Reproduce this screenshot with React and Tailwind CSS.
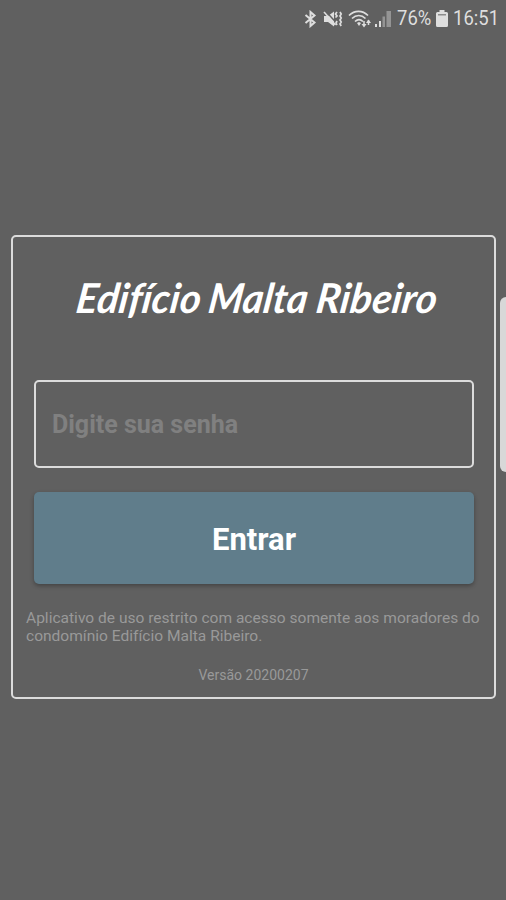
function BluetoothIcon() {
  return (
    <svg className="shrink-0" width="13" height="18" viewBox="0 0 13 18" fill="none" stroke="currentColor" strokeWidth="2">
      <path d="M1.500 5 10.500 12.500 6.500 16V2L10.500 5.500 1.500 13" />
    </svg>
  );
}

function MutedIcon() {
  return (
    <svg className="shrink-0" width="20" height="18" viewBox="0 0 20 18" fill="currentColor">
      <path d="M1 6h4l6-4.500v15L5 12H1z" />
      <path d="M3 1.500 13.500 13" stroke="#606060" strokeWidth="1.500" />
      <path d="M1 2 12.500 15" stroke="currentColor" strokeWidth="1.600" />
      <path
        d="M14 2l-1.500 2 1.500 2-1.500 1.500M14 11l-1 2 1 2M17 2l1.200 2-1.200 2 1.200 2-1.200 2 1.200 2-1.200 2 1.200 2"
        fill="none"
        stroke="currentColor"
        strokeWidth="1.700"
      />
    </svg>
  );
}

function WifiIcon() {
  return (
    <svg className="shrink-0" width="24" height="20" viewBox="0 0 24 20" fill="none" stroke="currentColor" strokeWidth="1.700">
      <path d="M1 6.500C6.500 1 14.500 1 20 6.500M4 9.500c4-4 9.500-4 13.500 0M7 12.500c2.500-2.400 5.500-2.400 8 0" />
      <path d="m9 14 2-1 2 1-2 3z" fill="currentColor" stroke="none" />
      <path d="M16 12v5M20.500 16v-5" strokeWidth="1.500" />
      <path d="m13.500 15 2.500 3.500 2.500-3.500zM18 14l2.500-3.500 2.500 3.500z" fill="currentColor" stroke="none" />
    </svg>
  );
}

function SignalIcon() {
  return (
    <svg className="shrink-0" width="17" height="18" viewBox="0 0 17 18" fill="currentColor">
      <path d="M0 14h2v3H0zM4 11h2v6H4z" />
      <path d="M7.500 6.500H10V17H7.500zM11.500 1H16v16h-4.500z" opacity=".42" />
    </svg>
  );
}

function BatteryIcon() {
  return (
    <svg className="shrink-0" width="12" height="18" viewBox="0 0 12 18" fill="currentColor">
      <path d="M3.500 0h5v2h2q1.500 0 1.500 1.500v12q0 1.500-1.500 1.500h-9Q0 17 0 15.500v-12Q0 2 1.500 2h2z" />
      <path d="M2 4h8v1.500H2z" fill="#606060" opacity=".65" />
    </svg>
  );
}

function StatusBar() {
  return (
    <header className="flex h-[37px] items-center pl-[304px] text-[#dedede]">
      <BluetoothIcon />
      <span className="ml-[6px] shrink-0">
        <MutedIcon />
      </span>
      <span className="ml-[5px] shrink-0">
        <WifiIcon />
      </span>
      <span className="ml-[3px] shrink-0">
        <SignalIcon />
      </span>
      <span className="ml-[5px] w-[38px] shrink-0 origin-left scale-x-[0.88] text-[21px] leading-none">76%</span>
      <span className="ml-[1px] shrink-0">
        <BatteryIcon />
      </span>
      <span className="ml-[5px] w-[46px] shrink-0 origin-left scale-x-[0.88] text-[21px] leading-none">16:51</span>
    </header>
  );
}

function Title() {
  return (
    <h1 className="flex h-[60px] items-center pl-[64px] font-['Lato',sans-serif] text-[41px] leading-none font-bold whitespace-nowrap text-white italic [font-variant-ligatures:none]">
      <span className="w-[132px] shrink-0">
        <span className="inline-block origin-left scale-x-[0.98] -skew-x-[8deg]">Edifício</span>
      </span>
      <span className="w-[108px] shrink-0">
        <span className="inline-block origin-left scale-x-[0.97] -skew-x-[8deg]">Malta</span>
      </span>
      <span className="shrink-0">
        <span className="inline-block origin-left scale-x-[0.99] -skew-x-[8deg]">Ribeiro</span>
      </span>
    </h1>
  );
}

export default function App() {
  return (
    <div className="relative h-[900px] w-[506px] overflow-hidden bg-[#606060] font-['Roboto',sans-serif]">
      <StatusBar />

      <main className="mt-[198px] ml-[11px] h-[464px] w-[485px] rounded-[5px] border-2 border-[#dcdcdc] pt-[30px]">
        <Title />

        <form className="mt-[53px] ml-[21px] w-[440px]" onSubmit={(e) => e.preventDefault()}>
          <input
            type="password"
            placeholder="Digite sua senha"
            className="block h-[88px] w-full rounded-[5px] border-2 border-[#dcdcdc] bg-transparent px-[16px] text-[25px] font-bold text-white outline-none placeholder:text-[#808080]"
          />
          <button
            type="submit"
            className="mt-[24px] block h-[92px] w-full rounded-[5px] bg-[#607d8b] pt-[5px] text-[31px] font-bold text-white shadow-[0_2px_4px_rgba(0,0,0,0.3)]"
          >
            Entrar
          </button>
        </form>

        <p className="mt-[25px] ml-[13px] text-[15.550px] leading-[18px] whitespace-nowrap text-[#999999]">
          Aplicativo de uso restrito com acesso somente aos moradores do
          <br />
          condomínio Edifício Malta Ribeiro.
        </p>
        <p className="mt-[21px] text-center text-[14px] leading-[19px] text-[#999999]">Versão 20200207</p>
      </main>

      {/* edge panel handle */}
      <div className="absolute top-[297px] right-[-6px] h-[175px] w-[12px] rounded-[6px] bg-[#d8d8d8]" />
    </div>
  );
}
